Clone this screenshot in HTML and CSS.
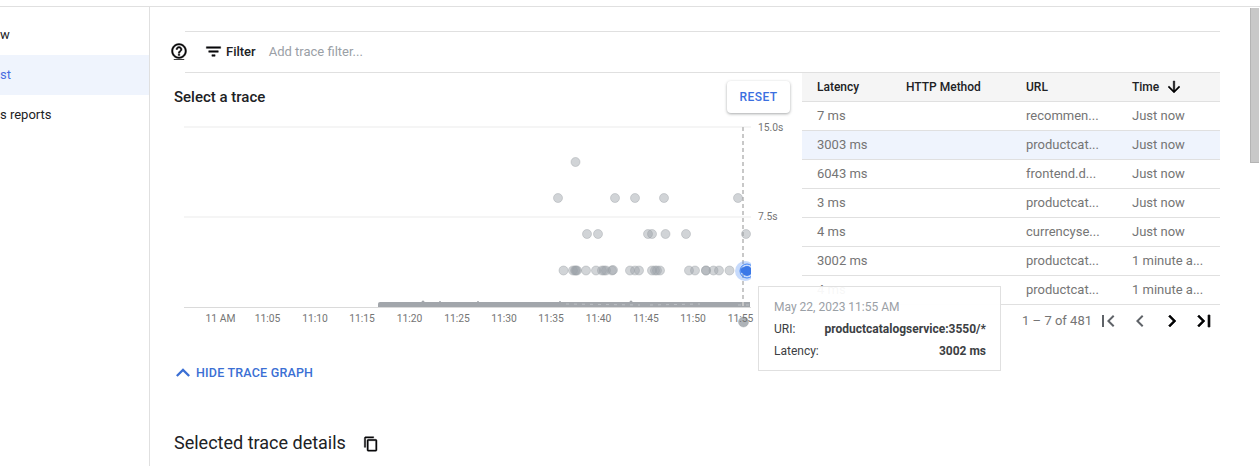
FILE: index.html
```html
<!DOCTYPE html>
<html>
<head>
<meta http-equiv="Content-Type" content="text/html; charset=utf-8"/>
<title>Trace list</title>
<link rel="stylesheet" href="styles.css">
</head>
<body>
<div class="topbar"></div>
<div class="page">
  <div class="side">
    <div class="side-item">w</div>
    <div class="side-item active">st</div>
    <div class="side-item">s reports</div>
  </div>
  <div class="main">
    <div class="filter-row">
      <div class="help">
        <svg width="18" height="18" viewBox="0 0 24 24"><path class="bold" d="M11 18h2v-2h-2v2zm1-16C6.48 2 2 6.48 2 12s4.48 10 10 10 10-4.48 10-10S17.52 2 12 2zm0 18c-4.41 0-8-3.59-8-8s3.59-8 8-8 8 3.59 8 8-3.59 8-8 8zm0-14c-2.21 0-4 1.79-4 4h2c0-1.1.9-2 2-2s2 .9 2 2c0 2-3 1.75-3 5h2c0-2.25 3-2.5 3-5 0-2.21-1.79-4-4-4z"/><path d="M5 23h14v1.4H5z"/></svg>
      </div>
      <div class="filter-box">
        <svg width="19" height="19" viewBox="0 0 24 24"><path class="bold" d="M10 18h4v-2h-4v2zM3 6v2h18V6H3zm3 7h12v-2H6v2z"/></svg>
        <span class="filter-label">Filter</span>
        <span class="filter-hint">Add trace filter...</span>
      </div>
    </div>

    <div class="content">
      <div class="chart-col">
        <div class="chart-head">
          <div class="chart-title">Select a trace</div>
          <button class="reset">RESET</button>
        </div>
        <svg class="chart" width="630" height="217" viewBox="172 113 630 217">
          <line class="grid" x1="184" y1="127" x2="751" y2="127"/>
          <line class="grid" x1="184" y1="217" x2="751" y2="217"/>
          <line class="axis" x1="184" y1="307.5" x2="751" y2="307.5"/>
          <text class="ylabel" x="758" y="131">15.0s</text>
          <text class="ylabel" x="758" y="220">7.5s</text>

          <path class="band" d="M378 307v-3q0-2 2-2h370v5z"/>
          <circle class="band" cx="423" cy="302" r="1.5"/>
          <circle class="band" cx="440" cy="302" r="1"/>
          <circle class="band" cx="478" cy="302" r="1"/>
          <circle class="band" cx="560" cy="302" r="1"/>
          <circle class="band" cx="631" cy="302" r="1.5"/>
          <line class="speck" x1="566" y1="304" x2="640" y2="305"/>
          <line class="speck" x1="650" y1="305" x2="700" y2="304"/>
          <line class="speck" x1="738" y1="305" x2="750" y2="305"/>

          <line class="cursor" x1="743" y1="127" x2="743" y2="307"/>

          <circle class="dot" cx="575.5" cy="162" r="4.5"/>
          <circle class="dot" cx="558" cy="198" r="4.5"/>
          <circle class="dot" cx="615" cy="198" r="4.5"/>
          <circle class="dot" cx="635" cy="198" r="4.5"/>
          <circle class="dot" cx="664" cy="198" r="4.5"/>
          <circle class="dot" cx="738" cy="198" r="4.5"/>
          <circle class="dot" cx="587" cy="234" r="4.5"/>
          <circle class="dot" cx="598" cy="234" r="4.5"/>
          <circle class="dot" cx="648" cy="234" r="4.5"/>
          <circle class="dot" cx="652" cy="234" r="4.5"/>
          <circle class="dot" cx="665.5" cy="234" r="4.5"/>
          <circle class="dot" cx="686" cy="234" r="4.5"/>
          <circle class="dot" cx="746" cy="234" r="4.5"/>
          <circle class="dot" cx="563.5" cy="270.5" r="4.5"/>
          <circle class="dot" cx="573" cy="270.5" r="4.5"/>
          <circle class="dot" cx="575" cy="270.5" r="4.5"/>
          <circle class="dot" cx="576" cy="270.5" r="4.5"/>
          <circle class="dot" cx="577" cy="270.5" r="4.5"/>
          <circle class="dot" cx="586" cy="270.5" r="4.5"/>
          <circle class="dot" cx="596" cy="270.5" r="4.5"/>
          <circle class="dot" cx="602" cy="270.5" r="4.5"/>
          <circle class="dot" cx="604" cy="270.5" r="4.5"/>
          <circle class="dot" cx="606" cy="270.5" r="4.5"/>
          <circle class="dot" cx="612" cy="270.5" r="4.5"/>
          <circle class="dot" cx="613" cy="270" r="4.5"/>
          <circle class="dot" cx="630" cy="270.5" r="4.5"/>
          <circle class="dot" cx="635" cy="270.5" r="4.5"/>
          <circle class="dot" cx="639" cy="270.5" r="4.5"/>
          <circle class="dot" cx="652" cy="270.5" r="4.5"/>
          <circle class="dot" cx="655" cy="270.5" r="4.5"/>
          <circle class="dot" cx="657" cy="270.5" r="4.5"/>
          <circle class="dot" cx="660" cy="270.5" r="4.5"/>
          <circle class="dot" cx="689" cy="270.5" r="4.5"/>
          <circle class="dot" cx="695" cy="270.5" r="4.5"/>
          <circle class="dot" cx="706" cy="270.5" r="4.5"/>
          <circle class="dot" cx="706" cy="270.5" r="4.5"/>
          <circle class="dot" cx="713.5" cy="270.5" r="4.5"/>
          <circle class="dot" cx="719" cy="270.5" r="4.5"/>
          <circle class="dot" cx="729.5" cy="270.5" r="4.5"/>
          <circle class="dot dark" cx="743.5" cy="322" r="5"/>

          <svg x="730" y="255" width="21" height="32" viewBox="730 255 21 32">
            <circle class="halo" cx="745" cy="271" r="10"/>
            <circle class="ring" cx="747" cy="271" r="7"/>
            <circle class="active-dot" cx="747" cy="271" r="5"/>
            <circle class="active-dot" cx="743.5" cy="270.5" r="3"/>
          </svg>

          <text class="xlabel" x="220.5" y="322">11 AM</text>
          <text class="xlabel" x="267.5" y="322">11:05</text>
          <text class="xlabel" x="315" y="322">11:10</text>
          <text class="xlabel" x="362" y="322">11:15</text>
          <text class="xlabel" x="409.5" y="322">11:20</text>
          <text class="xlabel" x="457" y="322">11:25</text>
          <text class="xlabel" x="504" y="322">11:30</text>
          <text class="xlabel" x="551" y="322">11:35</text>
          <text class="xlabel" x="598.5" y="322">11:40</text>
          <text class="xlabel" x="646" y="322">11:45</text>
          <text class="xlabel" x="693" y="322">11:50</text>
          <text class="xlabel" x="740.5" y="322">11:55</text>
        </svg>
        <a class="hide-link">
          <svg width="14" height="9" viewBox="6 8 12 7.4"><path d="M12 8l-6 6 1.41 1.41L12 10.83l4.59 4.58L18 14z"/></svg>
          HIDE TRACE GRAPH
        </a>
      </div>

      <div class="table-col">
        <table class="traces">
          <thead>
            <tr><th>Latency</th><th>HTTP Method</th><th>URL</th>
              <th>Time <svg class="sort" width="18" height="18" viewBox="0 0 24 24"><path class="bold" d="M20 12l-1.41-1.41L13 16.17V4h-2v12.17l-5.58-5.59L4 12l8 8 8-8z"/></svg></th></tr>
          </thead>
          <tbody>
            <tr><td>7 ms</td><td></td><td>recommen...</td><td>Just now</td></tr>
            <tr class="selected"><td>3003 ms</td><td></td><td>productcat...</td><td>Just now</td></tr>
            <tr><td>6043 ms</td><td></td><td>frontend.d...</td><td>Just now</td></tr>
            <tr><td>3 ms</td><td></td><td>productcat...</td><td>Just now</td></tr>
            <tr><td>4 ms</td><td></td><td>currencyse...</td><td>Just now</td></tr>
            <tr><td>3002 ms</td><td></td><td>productcat...</td><td>1 minute a...</td></tr>
            <tr><td>4 ms</td><td></td><td>productcat...</td><td>1 minute a...</td></tr>
          </tbody>
        </table>
        <div class="pager">
          <span class="pager-text">1 – 7 of 481</span>
          <svg class="off" width="24" height="24" viewBox="0 0 24 24"><path d="M18.41 16.59L13.82 12l4.59-4.59L17 6l-6 6 6 6zM6 6h2v12H6z"/></svg>
          <svg class="off" width="24" height="24" viewBox="0 0 24 24"><path d="M15.41 7.41L14 6l-6 6 6 6 1.41-1.41L10.83 12z"/></svg>
          <svg width="24" height="24" viewBox="0 0 24 24"><path class="bold" d="M10 6L8.59 7.41 13.17 12l-4.58 4.59L10 18l6-6z"/></svg>
          <svg width="24" height="24" viewBox="0 0 24 24"><path class="bold" d="M5.59 7.41L10.18 12l-4.59 4.59L7 18l6-6-6-6zM16 6h2v12h-2z"/></svg>
        </div>
      </div>

      <div class="tooltip">
        <div class="tip-date">May 22, 2023 11:55 AM</div>
        <div class="tip-row"><span>URI:</span><b>productcatalogservice:3550/*</b></div>
        <div class="tip-row"><span>Latency:</span><b>3002 ms</b></div>
      </div>
    </div>

    <div class="details">
      <span>Selected trace details</span>
      <svg width="16" height="16" viewBox="0 0 24 24"><path class="bold" d="M16 1H4c-1.1 0-2 .9-2 2v14h2V3h12V1zm3 4H8c-1.1 0-2 .9-2 2v14c0 1.1.9 2 2 2h11c1.1 0 2-.9 2-2V7c0-1.1-.9-2-2-2zm0 16H8V7h11v14z"/></svg>
    </div>
  </div>
</div>
<div class="scroll-thumb"></div>
</body>
</html>
```

FILE: styles.css
```css
html, body {
  margin: 0;
  height: 466px;
  overflow: hidden;
  background-color: white;
  font-family: Roboto, "Liberation Sans", sans-serif;
  font-size: 13px;
  color: #202124;
}

.bold {
  stroke: currentColor;
  stroke-width: .7;
}

.topbar {
  height: 6px;
  border-bottom: 1px solid #e0e0e0;
}

.page {
  display: flex;
  height: 459px;
}

.side {
  width: 149px;
  flex: none;
  padding-top: 8px;
  border-right: 1px solid #e0e0e0;
  overflow: hidden;
}

.side-item {
  height: 40px;
  line-height: 40px;
  white-space: nowrap;
}

.side-item.active {
  background-color: #eff4fd;
  color: #4a6ee0;
}

.main {
  flex: 1;
  padding: 24px 40px 0 22px;
  min-width: 0;
}

.filter-row {
  display: flex;
}

.help {
  width: 13px;
  padding-bottom: 2px;
  display: flex;
  align-items: center;
}

.help svg {
  flex: none;
  margin-left: -2px;
}

.filter-box {
  flex: 1;
  height: 38px;
  display: flex;
  align-items: center;
  padding: 0 0 2px 19px;
  border-top: 1px solid #e0e0e0;
  border-bottom: 1px solid #e0e0e0;
}

.filter-label {
  margin-left: 3px;
  font-weight: 500;
}

.filter-hint {
  margin-left: 13px;
  color: #9aa0a6;
}

.content {
  position: relative;
  display: flex;
}

.chart-col {
  width: 630px;
  flex: none;
}

.chart-head {
  display: flex;
  justify-content: space-between;
  align-items: center;
  height: 32px;
  padding: 8px 12px 0 2px;
}

.chart-title {
  font-size: 15px;
  font-weight: 500;
}

.reset {
  width: 63px;
  height: 32px;
  border: none;
  border-radius: 4px;
  background: white;
  color: #3b6fe0;
  font-family: inherit;
  font-size: 12px;
  font-weight: 500;
  letter-spacing: .4px;
  box-shadow: 0 1px 3px rgba(60, 64, 67, .45);
}

.chart {
  display: block;
}

.grid {
  stroke: #ebebeb;
}

.axis {
  stroke: #dadada;
}

.ylabel, .xlabel {
  font-size: 10.3px;
  fill: #757575;
}

.xlabel {
  text-anchor: middle;
}

.band {
  fill: #a2a6ab;
}

.speck {
  stroke: #bcc0c4;
  stroke-width: 1;
  stroke-dasharray: 3 5;
}

.cursor {
  stroke: #c8c8c8;
  stroke-width: 2;
  stroke-dasharray: 4 3;
}

.dot {
  fill: #9aa0a6;
  fill-opacity: .45;
  stroke: #9aa0a6;
  stroke-opacity: .4;
}

.dot.dark {
  fill-opacity: .8;
}

.halo {
  fill: #4285f4;
  fill-opacity: .3;
}

.ring {
  fill: none;
  stroke: #4285f4;
  stroke-width: 1;
}

.active-dot {
  fill: #3b78e7;
}

.hide-link {
  display: flex;
  align-items: center;
  gap: 6px;
  margin: 32px 0 0 4px;
  height: 20px;
  color: #3b6fd4;
  font-size: 12.5px;
  font-weight: 500;
  letter-spacing: .2px;
}

.hide-link svg {
  fill: #3b6fd4;
}

.table-col {
  flex: 1;
  min-width: 0;
}

.traces {
  width: 100%;
  table-layout: fixed;
  border-collapse: collapse;
}

.traces th, .traces td {
  height: 28px;
  padding: 0 0 0 15px;
  border-bottom: 1px solid #e0e0e0;
  text-align: left;
  white-space: nowrap;
}

.traces th {
  background-color: #f5f5f5;
  font-size: 12px;
  font-weight: 500;
}

.traces td {
  height: 26px;
  padding-bottom: 2px;
  color: #757575;
}

.traces th:nth-child(1) { width: 74px; }
.traces th:nth-child(2) { width: 105px; }
.traces th:nth-child(3) { width: 91px; }

.traces .selected td {
  background-color: #eff4fd;
}

.sort {
  vertical-align: -5px;
  margin-left: 3px;
}

.pager {
  display: flex;
  justify-content: flex-end;
  align-items: center;
  gap: 8px;
  height: 31px;
  padding-right: 4px;
}

.pager-text {
  margin-right: -4px;
  color: #757575;
}

.pager .off {
  fill: #5f6368;
}

.tooltip {
  position: absolute;
  left: 586px;
  top: 213px;
  width: 212px;
  height: 83px;
  padding: 0 14px 0 15px;
  border: 1px solid #e0e0e0;
  background: rgba(255, 255, 255, .94);
  font-size: 12px;
  color: #3c4043;
}

.tip-date {
  margin-top: 13px;
  color: #9aa0a6;
}

.tip-row {
  display: flex;
  justify-content: space-between;
  margin-top: 8px;
}

.tip-row b {
  font-weight: 700;
}

.details {
  display: flex;
  align-items: center;
  gap: 18px;
  margin: 50px 0 0 2px;
  font-size: 18px;
}

.details svg {
  margin: 2px 0 0 -1px;
}

.scroll-thumb {
  position: absolute;
  top: 8px;
  left: 1250px;
  width: 9px;
  height: 155px;
  background-color: #c8c8c8;
  border-left: 1px solid #b4b4b4;
  border-bottom: 1px solid #b4b4b4;
  box-sizing: border-box;
}
```
